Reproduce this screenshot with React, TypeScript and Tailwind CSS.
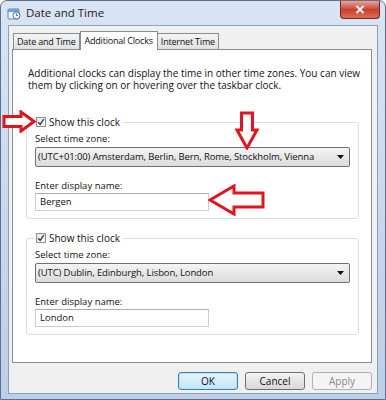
import React from 'react';

function TitleIcon() {
  return (
    <svg width="14" height="13" viewBox="0 0 14 13" className="shrink-0">
      <rect x="1" y="2" width="11" height="10" rx="1" fill="#eaf2fb" stroke="#5b86b8" />
      <rect x="1" y="2" width="11" height="3" fill="#6f9fd6" />
      <circle cx="9.5" cy="8.5" r="3.5" fill="#ffffff" stroke="#4a74a8" />
      <path d="M9.5 6.5v2h1.5" stroke="#2b4f80" strokeWidth="0.8" fill="none" />
    </svg>
  );
}

function Checkbox() {
  return (
    <span className="flex h-[10px] w-[10px] items-center justify-center border border-[#8e8f8f] bg-gradient-to-br from-[#e6e6e6] to-[#fbfbfb]">
      <svg width="8" height="8" viewBox="0 0 8 8">
        <path d="M1.2 4.2 L3.2 6.4 L6.8 1.2" stroke="#2b3a55" strokeWidth="1.4" fill="none" />
      </svg>
    </span>
  );
}

function ClockGroup({ zone, name }: { zone: string; name: string }) {
  return (
    <fieldset className="ml-[13px] mr-[12px] rounded-[3px] border border-[#d5dfe5] px-[8px] pb-[7px] text-[9.5px]">
      <legend className="flex h-[12px] items-center gap-[3px] pl-[1px] pr-[3px] text-[10px] leading-[12px]">
        <Checkbox />
        <span>Show this clock</span>
      </legend>
      <div className="mt-[5px] leading-[12px]">Select time zone:</div>
      <div className="mt-[2px] flex h-[20px] items-center justify-between rounded-[2px] border border-[#707070] bg-gradient-to-b from-[#f4f4f4] to-[#dcdcdc] pl-[2px] pr-[5px]">
        <span className="tracking-[-0.1px]">{zone}</span>
        <svg width="7" height="4" viewBox="0 0 7 4">
          <path d="M0 0h7L3.5 4z" fill="#111" />
        </svg>
      </div>
      <div className="mt-[13px] leading-[12px]">Enter display name:</div>
      <div className="mt-[1px] flex h-[18px] w-[174px] items-center border border-[#c9ccd1] border-t-[#abadb3] bg-white pl-[4px]">
        {name}
      </div>
    </fieldset>
  );
}

function RedArrow({ className, points, w, h }: { className: string; points: string; w: number; h: number }) {
  return (
    <svg width={w} height={h} viewBox={`0 0 ${w} ${h}`} className={`absolute ${className}`}>
      <polygon points={points} fill="#ffffff" stroke="#e3141c" strokeWidth="3" strokeLinejoin="miter" />
    </svg>
  );
}

export default function App() {
  return (
    <div className="relative flex h-[400px] w-[386px] flex-col overflow-hidden rounded-t-[7px] border border-[#5d6f90] bg-gradient-to-b from-[#d9e5f4] via-[#c8d9ee] to-[#bccfe8] font-['Open_Sans',sans-serif] text-[10px] text-[#111]">
      {/* title bar */}
      <div className="flex h-[24px] shrink-0 items-start">
        <div className="flex h-[24px] items-center pl-[6px]">
          <TitleIcon />
          <span className="ml-[5px] text-[11.5px] text-[#1b1b1b]">Date and Time</span>
        </div>
        <div className="ml-auto mr-[5px] flex h-[18px] w-[40px] items-center justify-center rounded-b-[4px] border border-t-0 border-[#6b2a24] bg-gradient-to-b from-[#eba393] via-[#cc3f30] to-[#df6a50]">
          <svg width="10" height="9" viewBox="0 0 10 9">
            <path d="M1.5 1 L8.5 8 M8.5 1 L1.5 8" stroke="#ffffff" strokeWidth="2" />
          </svg>
        </div>
      </div>

      {/* client area */}
      <div className="mx-[7px] mb-[5px] flex flex-1 flex-col border border-[#8fa0ba] bg-[#f0f0f0]">
        {/* tabs */}
        <div className="mt-[5px] flex h-[18px] items-end pl-[4px] text-[9px] tracking-[-0.2px]">
          <div className="flex h-[16px] items-center border border-b-0 border-[#898c95] bg-gradient-to-b from-[#f5f5f5] to-[#e1e1e1] px-[3px]">
            Date and Time
          </div>
          <div className="relative z-10 -mb-px flex h-[19px] items-center border border-b-0 border-[#898c95] bg-white px-[4px]">
            Additional Clocks
          </div>
          <div className="flex h-[16px] items-center border border-b-0 border-l-0 border-[#898c95] bg-gradient-to-b from-[#f5f5f5] to-[#e1e1e1] px-[3px]">
            Internet Time
          </div>
        </div>

        {/* tab panel */}
        <div className="ml-[3px] mr-[5px] flex h-[314px] flex-col border border-[#898c95] bg-white">
          <p className="ml-[15px] mr-[10px] mt-[17px] leading-[12px]">
            Additional clocks can display the time in other time zones. You can view them by clicking on or hovering over the taskbar clock.
          </p>
          <div className="mt-[25px]">
            <ClockGroup zone="(UTC+01:00) Amsterdam, Berlin, Bern, Rome, Stockholm, Vienna" name="Bergen" />
          </div>
          <div className="mt-[13px]">
            <ClockGroup zone="(UTC) Dublin, Edinburgh, Lisbon, London" name="London" />
          </div>
        </div>

        {/* buttons */}
        <div className="mt-[9px] flex justify-end gap-[7px] pr-[5px]">
          <button className="h-[18px] w-[60px] rounded-[3px] border border-[#3c7fb1] bg-gradient-to-b from-[#eaf6fd] to-[#bee6fd] text-[10px] shadow-[inset_0_0_0_1px_#b9e3fb]">
            OK
          </button>
          <button className="h-[18px] w-[60px] rounded-[3px] border border-[#707070] bg-gradient-to-b from-[#f2f2f2] to-[#d8d8d8] text-[10px]">
            Cancel
          </button>
          <button className="h-[18px] w-[60px] rounded-[3px] border border-[#adb2b5] bg-[#f4f4f4] text-[10px] text-[#8a8a8a]">
            Apply
          </button>
        </div>
      </div>

      {/* red annotation arrows */}
      <RedArrow className="left-[1px] top-[109px]" w={34} h={23} points="2,6.5 19,6.5 19,2 32,11.5 19,21 19,16.5 2,16.5" />
      <RedArrow className="left-[234px] top-[110px]" w={24} h={39} points="6.5,2 17.5,2 17.5,19 22,19 12,37 2,19 6.5,19" />
      <RedArrow className="left-[207px] top-[183px]" w={57} h={32} points="55,9 26,9 26,2 2,16 26,30 26,23 55,23" />
    </div>
  );
}
